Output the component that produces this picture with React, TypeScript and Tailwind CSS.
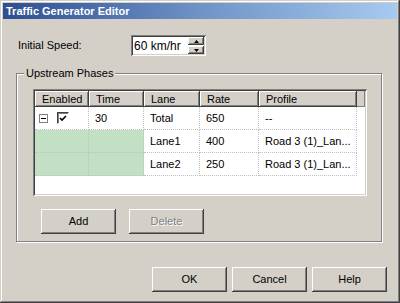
import React from "react";

const raised =
  "shadow-[inset_-1px_-1px_#404040,inset_1px_1px_#fff,inset_-2px_-2px_#808080,inset_2px_2px_#d4d0c8]";
const sunken =
  "shadow-[inset_1px_1px_#808080,inset_-1px_-1px_#fff,inset_2px_2px_#404040,inset_-2px_-2px_#d4d0c8]";

const columns = [
  { name: "Enabled", w: "w-[54px]" },
  { name: "Time", w: "w-[55px]" },
  { name: "Lane", w: "w-[56px]" },
  { name: "Rate", w: "w-[59px]" },
  { name: "Profile", w: "w-[98px]" },
];

const rows = [
  { parent: true, time: "30", lane: "Total", rate: "650", profile: "--" },
  { parent: false, time: "", lane: "Lane1", rate: "400", profile: "Road 3 (1)_Lan..." },
  { parent: false, time: "", lane: "Lane2", rate: "250", profile: "Road 3 (1)_Lan..." },
];

const Button = ({ label, disabled }: { label: string; disabled?: boolean }) => (
  <div
    className={`flex h-[25px] w-[75px] items-center justify-center bg-[#d4d0c8] text-[11px] ${raised} ${
      disabled ? "text-[#808080] [text-shadow:1px_1px_0_#fff]" : "text-black"
    }`}
  >
    {label}
  </div>
);

const Arrow = ({ up }: { up?: boolean }) => (
  <svg width="5" height="3" viewBox="0 0 5 3">
    <path d={up ? "M2.5 0 L5 3 L0 3 Z" : "M0 0 L5 0 L2.5 3 Z"} fill="#000" />
  </svg>
);

const Cell = ({
  w,
  green,
  children,
}: {
  w: string;
  green?: boolean;
  children?: React.ReactNode;
}) => (
  <div
    className={`${w} flex h-[23px] shrink-0 items-center overflow-hidden whitespace-nowrap border-r border-b border-dotted border-[#c0c0c0] pl-[6px] ${
      green ? "bg-[#c1e0c4]" : "bg-white"
    }`}
  >
    {children}
  </div>
);

export default function App() {
  return (
    <div
      className={`flex h-[303px] w-[400px] flex-col bg-[#d4d0c8] p-[3px] font-['Liberation_Sans',Arial,sans-serif] text-[11px] text-black shadow-[inset_-1px_-1px_#404040,inset_1px_1px_#d4d0c8,inset_-2px_-2px_#808080,inset_2px_2px_#fff]`}
    >
      {/* title bar */}
      <div className="flex h-[16px] items-center bg-gradient-to-r from-[#2d4f93] via-[#6f93c6] to-[#a6caf0] pl-[3px] text-[11px] font-bold text-white">
        Traffic Generator Editor
      </div>

      <div className="flex flex-col pl-[13px]">
        {/* initial speed */}
        <div className="mt-[16px] flex items-center">
          <span className="ml-[2px] w-[113px]">Initial Speed:</span>
          <div className={`flex h-[21px] w-[75px] items-center bg-white p-[2px] ${sunken}`}>
            <span className="flex-1 pl-[1px] text-[12px]">60 km/hr</span>
            <div className="flex h-[17px] w-[16px] flex-col">
              <div className={`flex h-[8px] items-center justify-center bg-[#d4d0c8] ${raised}`}>
                <Arrow up />
              </div>
              <div className={`mt-[1px] flex h-[8px] items-center justify-center bg-[#d4d0c8] ${raised}`}>
                <Arrow />
              </div>
            </div>
          </div>
        </div>

        {/* group box */}
        <div className="mt-[17px] flex w-[366px] flex-col border border-[#808080] pb-[7px] pl-[16px] shadow-[1px_1px_0_#fff,inset_1px_1px_0_#fff]">
          <span className="-mt-[8px] -ml-[9px] h-[14px] self-start bg-[#d4d0c8] px-[2px] leading-[14px]">
            Upstream Phases
          </span>

          {/* grid */}
          <div className={`mt-[9px] flex h-[107px] w-[334px] flex-col bg-white p-[2px] ${sunken}`}>
            <div className="flex h-[16px] shrink-0">
              {columns.map((c) => (
                <div
                  key={c.name}
                  className={`${c.w} flex items-center bg-[#d4d0c8] pl-[7px] ${raised}`}
                >
                  {c.name}
                </div>
              ))}
              <div className="w-[8px] bg-[#d4d0c8] shadow-[inset_-1px_-1px_#808080]" />
            </div>
            {rows.map((r, i) => (
              <div key={i} className="flex">
                <Cell w="w-[54px]" green={!r.parent}>
                  {r.parent && (
                    <div className="flex items-center">
                      <div className="ml-[-2px] flex h-[9px] w-[9px] items-center justify-center border border-[#808080] bg-white">
                        <div className="h-px w-[5px] bg-black" />
                      </div>
                      <div className="ml-[9px] flex h-[12px] w-[12px] items-center justify-center border border-t-[#404040] border-l-[#404040] border-r-white border-b-white bg-white shadow-[inset_1px_1px_#808080]">
                        <svg width="8" height="7" viewBox="0 0 8 7">
                          <path d="M1 3 L3 5 L7 1" stroke="#000" strokeWidth="1.6" fill="none" />
                        </svg>
                      </div>
                    </div>
                  )}
                </Cell>
                <Cell w="w-[55px]" green={!r.parent}>
                  {r.time}
                </Cell>
                <Cell w="w-[56px]">{r.lane}</Cell>
                <Cell w="w-[59px]">{r.rate}</Cell>
                <Cell w="w-[98px]">{r.profile}</Cell>
              </div>
            ))}
          </div>

          <div className="mt-[13px] flex gap-[13px] pl-[8px]">
            <Button label="Add" />
            <Button label="Delete" disabled />
          </div>
        </div>

        {/* dialog buttons */}
        <div className="mt-[25px] flex w-[371px] justify-end gap-[5px]">
          <Button label="OK" />
          <Button label="Cancel" />
          <Button label="Help" />
        </div>
      </div>
    </div>
  );
}
